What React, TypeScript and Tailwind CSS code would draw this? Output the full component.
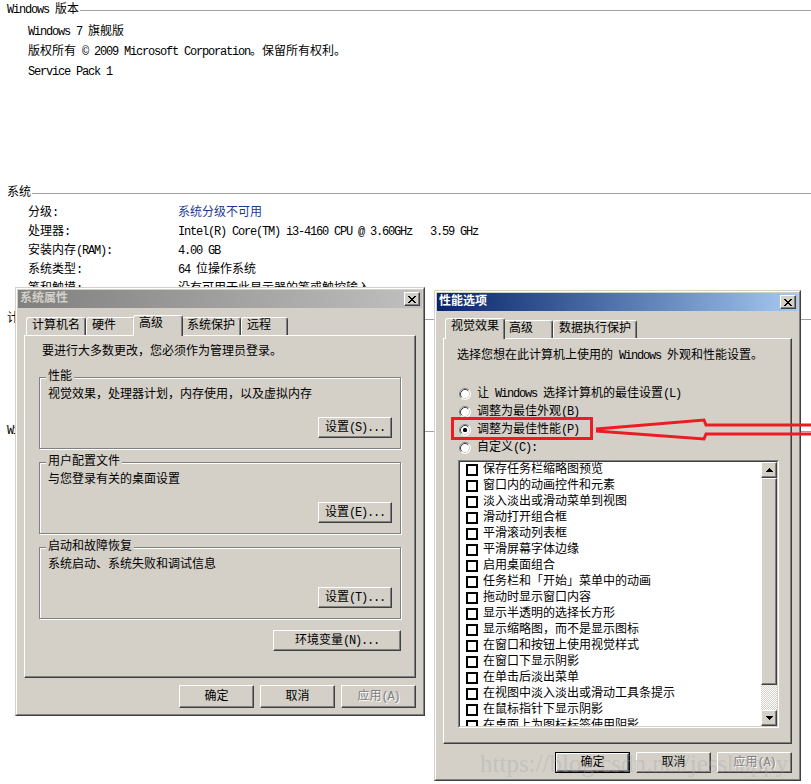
import React from 'react';

const CJK_RE = /([\u2E80-\u9FFF\uF900-\uFAFF\uFE30-\uFE4F\uFF00-\uFFEF]+)/;

function T({ s }: { s: string }) {
  const parts = s.split(CJK_RE);
  return (
    <>
      {parts.map((p, i) =>
        p === '' ? null : i % 2 === 1 ? (
          <span key={i}>{p}</span>
        ) : (
          <span key={i} className="tracking-[-1.2px]">
            {p}
          </span>
        )
      )}
    </>
  );
}

function Heading({ text, className }: { text: string; className: string }) {
  return (
    <div className={`flex items-center ${className}`}>
      <span className="pl-[7px] pr-[1px] leading-[14px] whitespace-pre">
        <T s={text} />
      </span>
      <div className="flex-1 h-px bg-[#a0a0a0]" />
    </div>
  );
}

function CloseBtn() {
  return (
    <div className="w-[16px] h-[14px] bg-[#d4d0c8] border border-t-white border-l-white border-r-[#404040] border-b-[#404040] shadow-[inset_-1px_-1px_0_#808080] flex items-center justify-center">
      <svg width="8" height="7" viewBox="0 0 8 7" shapeRendering="crispEdges">
        <path
          d="M0 0h2v1h-2z M6 0h2v1h-2z M1 1h2v1h-2z M5 1h2v1h-2z M2 2h4v1h-4z M3 3h2v1h-2z M2 4h4v1h-4z M1 5h2v1h-2z M5 5h2v1h-2z M0 6h2v1h-2z M6 6h2v1h-2z"
          fill="#000"
        />
      </svg>
    </div>
  );
}

function TitleBar({ title, active }: { title: string; active: boolean }) {
  return (
    <div
      className={
        active
          ? 'h-[18px] shrink-0 flex items-center bg-linear-to-r from-[#0a246a] to-[#a6caf0] pl-[2px] pr-[2px]'
          : 'h-[18px] shrink-0 flex items-center bg-linear-to-r from-[#808080] to-[#c0c0c0] pl-[2px] pr-[2px]'
      }
    >
      <span className={active ? 'flex-1 font-bold text-white' : 'flex-1 font-bold text-[#d4d0c8]'}>{title}</span>
      <CloseBtn />
    </div>
  );
}

type Tab = { label: string; w: string; selected?: boolean };

function Tabs({ tabs, className }: { tabs: Tab[]; className: string }) {
  return (
    <div className={`flex items-end h-[20px] shrink-0 ${className}`}>
      {tabs.map((t) =>
        t.selected ? (
          <div
            key={t.label}
            className={`${t.w} relative z-10 -mx-[2px] mb-[-1px] h-[21px] bg-[#d4d0c8] border-l border-t border-r border-l-white border-t-white border-r-[#404040] shadow-[inset_-1px_0_0_#808080] rounded-t-[3px] pl-[5px] leading-[16px] whitespace-pre`}
          >
            <T s={t.label} />
          </div>
        ) : (
          <div
            key={t.label}
            className={`${t.w} h-[18px] border-l border-t border-r border-l-white border-t-white border-r-[#404040] shadow-[inset_-1px_0_0_#808080] rounded-t-[3px] pl-[5px] leading-[16px] whitespace-pre`}
          >
            <T s={t.label} />
          </div>
        )
      )}
    </div>
  );
}

function Btn({
  label,
  className,
  disabled,
  isDefault,
}: {
  label: string;
  className: string;
  disabled?: boolean;
  isDefault?: boolean;
}) {
  const inner = (
    <div
      className={`h-full w-full flex items-center justify-center bg-[#d4d0c8] border border-t-white border-l-white border-r-[#404040] border-b-[#404040] shadow-[inset_-1px_-1px_0_#808080] leading-[14px] whitespace-pre ${
        disabled ? 'text-[#808080] [text-shadow:1px_1px_0_#ffffff]' : ''
      }`}
    >
      <T s={label} />
    </div>
  );
  return isDefault ? (
    <div className={`${className} border border-black`}>{inner}</div>
  ) : (
    <div className={className}>{inner}</div>
  );
}

function Group({ mt, legend, text, btn }: { mt: string; legend: string; text: string; btn: string }) {
  return (
    <fieldset
      className={`${mt} border border-[#808080] shadow-[inset_1px_1px_0_#ffffff,1px_1px_0_#ffffff] px-[8px] pb-[10px]`}
    >
      <legend className="ml-[-2px] px-[2px] leading-[14px] bg-[#d4d0c8]">
        <T s={legend} />
      </legend>
      <div className="mt-[4px] leading-[14px]">
        <T s={text} />
      </div>
      <div className="mt-[15px] flex justify-end">
        <Btn className="w-[74px] h-[21px]" label={btn} />
      </div>
    </fieldset>
  );
}

function Radio({ checked }: { checked?: boolean }) {
  return (
    <svg width="12" height="12" viewBox="0 0 12 12" className="shrink-0">
      <circle cx="6" cy="6" r="5.5" fill="#ffffff" />
      <path d="M2.11 9.89 A5.5 5.5 0 0 1 9.89 2.11" stroke="#808080" fill="none" />
      <path d="M9.89 2.11 A5.5 5.5 0 0 1 2.11 9.89" stroke="#ffffff" fill="none" />
      <path d="M2.82 9.18 A4.5 4.5 0 0 1 9.18 2.82" stroke="#404040" fill="none" />
      <path d="M9.18 2.82 A4.5 4.5 0 0 1 2.82 9.18" stroke="#d4d0c8" fill="none" />
      {checked && <rect x="4" y="4" width="4" height="4" rx="1.5" fill="#000" />}
    </svg>
  );
}

function ArrowBtn({ up }: { up?: boolean }) {
  return (
    <div className="h-[16px] shrink-0 bg-[#d4d0c8] border border-t-white border-l-white border-r-[#404040] border-b-[#404040] shadow-[inset_-1px_-1px_0_#808080] flex items-center justify-center">
      <svg width="7" height="4" viewBox="0 0 7 4" shapeRendering="crispEdges">
        {up ? (
          <path d="M3 0h1v1h-1z M2 1h3v1h-3z M1 2h5v1h-5z M0 3h7v1h-7z" fill="#000" />
        ) : (
          <path d="M0 0h7v1h-7z M1 1h5v1h-5z M2 2h3v1h-3z M3 3h1v1h-1z" fill="#000" />
        )}
      </svg>
    </div>
  );
}

const items = [
  '保存任务栏缩略图预览',
  '窗口内的动画控件和元素',
  '淡入淡出或滑动菜单到视图',
  '滑动打开组合框',
  '平滑滚动列表框',
  '平滑屏幕字体边缘',
  '启用桌面组合',
  '任务栏和「开始」菜单中的动画',
  '拖动时显示窗口内容',
  '显示半透明的选择长方形',
  '显示缩略图，而不是显示图标',
  '在窗口和按钮上使用视觉样式',
  '在窗口下显示阴影',
  '在单击后淡出菜单',
  '在视图中淡入淡出或滑动工具条提示',
  '在鼠标指针下显示阴影',
  '在桌面上为图标标签使用阴影',
];

const radios = ['让 Windows 选择计算机的最佳设置(L)', '调整为最佳外观(B)', '调整为最佳性能(P)', '自定义(C):'];

const sysRows: [string, string, boolean?][] = [
  ['分级:', '系统分级不可用', true],
  ['处理器:', 'Intel(R) Core(TM) i3-4160 CPU @ 3.60GHz   3.59 GHz'],
  ['安装内存(RAM):', '4.00 GB'],
  ['系统类型:', '64 位操作系统'],
  ['笔和触摸:', '没有可用于此显示器的笔或触控输入'],
];

export default function App() {
  return (
    <div className="relative w-[811px] h-[784px] overflow-hidden bg-white text-black text-[12px] leading-[14px] font-['Liberation_Mono','Noto_Sans_CJK_SC',monospace]">
      {/* Background system page */}
      <div className="flex flex-col">
        <Heading text="Windows 版本" className="mt-[3px]" />
        <div className="mt-[5px] pl-[28px] leading-[20px] flex flex-col whitespace-pre">
          <div>
            <T s="Windows 7 旗舰版" />
          </div>
          <div>
            <T s="版权所有 © 2009 Microsoft Corporation。保留所有权利。" />
          </div>
          <div>
            <T s="Service Pack 1" />
          </div>
        </div>
        <Heading text="系统" className="mt-[104px]" />
        <div className="mt-[4px] pl-[28px] grid grid-cols-[150px_1fr] leading-[19px] whitespace-pre">
          {sysRows.map(([k, v, link]) => (
            <React.Fragment key={k}>
              <div>
                <T s={k} />
              </div>
              <div className={link ? 'text-[#1c3a94]' : ''}>
                <T s={v} />
              </div>
            </React.Fragment>
          ))}
        </div>
        <Heading text="计算机名称、域和工作组设置" className="mt-[13px]" />
        <Heading text="Windows 激活" className="mt-[98px]" />
      </div>

      {/* 系统属性 dialog (inactive) */}
      <div className="absolute left-[15px] top-[287px] w-[410px] h-[429px] bg-[#d4d0c8] border border-t-[#d4d0c8] border-l-[#d4d0c8] border-r-[#404040] border-b-[#404040]">
        <div className="h-full border border-t-white border-l-white border-r-[#808080] border-b-[#808080] p-[1px] flex flex-col">
          <TitleBar title="系统属性" active={false} />
          <div className="mx-[6px] mt-[7px] flex flex-col">
            <Tabs
              className="pl-[2px]"
              tabs={[
                { label: '计算机名', w: 'w-[60px]' },
                { label: '硬件', w: 'w-[49px]' },
                { label: '高级', w: 'w-[50px]', selected: true },
                { label: '系统保护', w: 'w-[60px]' },
                { label: '远程', w: 'w-[47px]' },
              ]}
            />
            <div className="h-[343px] bg-[#d4d0c8] border border-t-white border-l-white border-r-[#404040] border-b-[#404040] shadow-[inset_-1px_-1px_0_#808080] pt-[9px] px-[14px] flex flex-col">
              <div className="pl-[3px] leading-[14px]">
                <T s="要进行大多数更改，您必须作为管理员登录。" />
              </div>
              <Group mt="mt-[11px]" legend="性能" text="视觉效果，处理器计划，内存使用，以及虚拟内存" btn="设置(S)..." />
              <Group mt="mt-[6px]" legend="用户配置文件" text="与您登录有关的桌面设置" btn="设置(E)..." />
              <Group mt="mt-[6px]" legend="启动和故障恢复" text="系统启动、系统失败和调试信息" btn="设置(T)..." />
              <div className="mt-[11px] flex justify-end">
                <Btn className="w-[128px] h-[21px]" label="环境变量(N)..." />
              </div>
            </div>
            <div className="mt-[7px] flex justify-end gap-[6px]">
              <Btn className="w-[75px] h-[23px]" label="确定" />
              <Btn className="w-[75px] h-[23px]" label="取消" />
              <Btn className="w-[75px] h-[23px]" label="应用(A)" disabled />
            </div>
          </div>
        </div>
      </div>

      {/* 性能选项 dialog (active) */}
      <div className="absolute left-[434px] top-[290px] w-[367px] h-[491px] bg-[#d4d0c8] border border-t-[#d4d0c8] border-l-[#d4d0c8] border-r-[#404040] border-b-[#404040]">
        <div className="h-full border border-t-white border-l-white border-r-[#808080] border-b-[#808080] p-[1px] flex flex-col">
          <TitleBar title="性能选项" active />
          <div className="mx-[6px] mt-[7px] flex flex-col">
            <Tabs
              className="pl-[4px]"
              tabs={[
                { label: '视觉效果', w: 'w-[60px]', selected: true },
                { label: '高级', w: 'w-[50px]' },
                { label: '数据执行保护', w: 'w-[84px]' },
              ]}
            />
            <div className="h-[406px] bg-[#d4d0c8] border border-t-white border-l-white border-r-[#404040] border-b-[#404040] shadow-[inset_-1px_-1px_0_#808080] pt-[10px] pl-[13px] pr-[12px] flex flex-col">
              <div className="leading-[14px] whitespace-pre">
                <T s="选择您想在此计算机上使用的 Windows 外观和性能设置。" />
              </div>
              <div className="mt-[22px] flex flex-col">
                {radios.map((r, i) => (
                  <div key={r} className="h-[18px] flex items-center pl-[2px] gap-[6px] whitespace-pre">
                    <Radio checked={i === 2} />
                    <span>
                      <T s={r} />
                    </span>
                  </div>
                ))}
              </div>
              <div className="ml-[1px] mt-[3px] h-[268px] flex border border-t-[#808080] border-l-[#808080] border-r-white border-b-white bg-white">
                <div className="flex-1 flex border border-t-[#404040] border-l-[#404040] border-r-[#d4d0c8] border-b-[#d4d0c8] overflow-hidden">
                  <div className="flex-1 overflow-hidden flex flex-col">
                    {items.map((it) => (
                      <div key={it} className="h-[16px] shrink-0 flex items-center pl-[6px] gap-[5px]">
                        <div className="w-[12px] h-[12px] shrink-0 border-2 border-black bg-white" />
                        <span className="leading-[16px] whitespace-nowrap">
                          <T s={it} />
                        </span>
                      </div>
                    ))}
                  </div>
                  <div className="w-[16px] shrink-0 flex flex-col">
                    <ArrowBtn up />
                    <div className="h-[207px] shrink-0 bg-[#d4d0c8] border border-t-white border-l-white border-r-[#404040] border-b-[#404040] shadow-[inset_-1px_-1px_0_#808080]" />
                    <div className="flex-1 bg-[image:repeating-conic-gradient(#d4d0c8_0%_25%,#ffffff_0%_50%)] [background-size:2px_2px]" />
                    <ArrowBtn />
                  </div>
                </div>
              </div>
            </div>
            <div className="mt-[8px] flex justify-end gap-[6px]">
              <Btn className="w-[75px] h-[21px]" label="确定" isDefault />
              <Btn className="w-[75px] h-[21px]" label="取消" />
              <Btn className="w-[75px] h-[21px]" label="应用(A)" disabled />
            </div>
          </div>
        </div>
      </div>

      {/* Red annotation */}
      <svg className="absolute left-0 top-0 pointer-events-none z-20" width="811" height="784" viewBox="0 0 811 784">
        <rect x="452.5" y="418.5" width="139" height="20" fill="none" stroke="#ed1c24" strokeWidth="3" />
        <polyline points="596,429 704,420 706,425 811,425" fill="none" stroke="#ed1c24" strokeWidth="3" />
        <polyline points="596,431 704,439 706,434 811,434" fill="none" stroke="#ed1c24" strokeWidth="3" />
      </svg>

      {/* Watermark */}
      <div className="absolute left-[480px] top-[751px] z-30 pointer-events-none font-['Liberation_Serif',serif] text-[25px] leading-none text-[#a8a8a8]/40 whitespace-nowrap">
        https://blog.csdn.net/jesshappy
      </div>
    </div>
  );
}
